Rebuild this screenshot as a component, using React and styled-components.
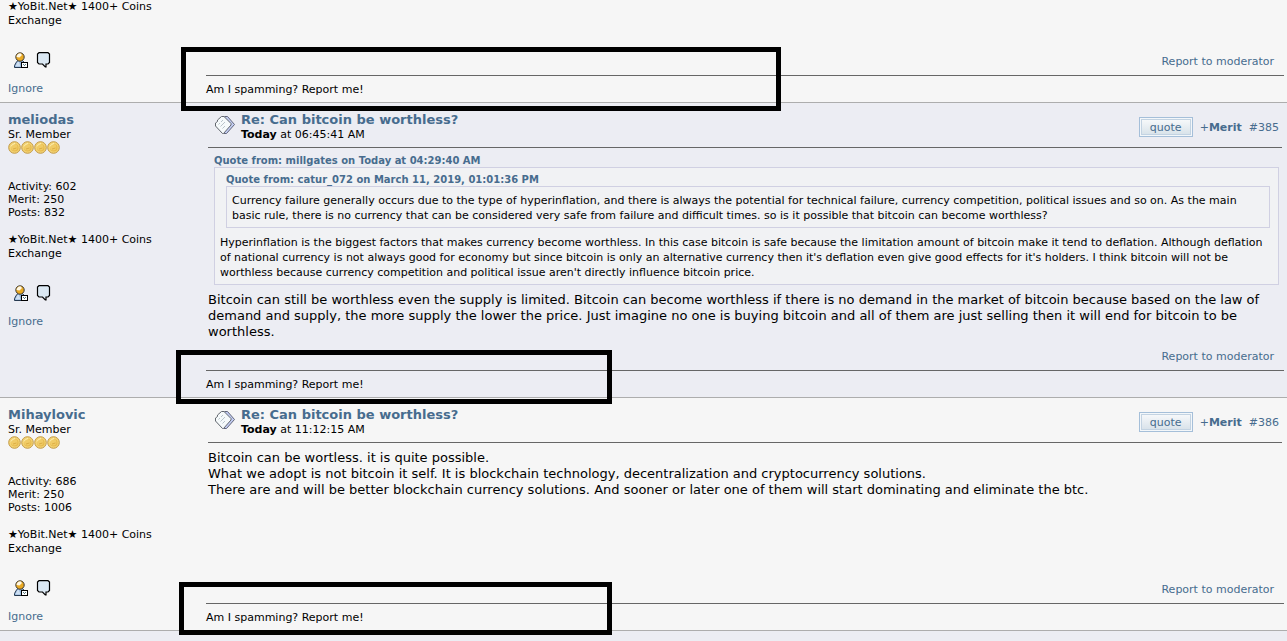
import React from "react";
import styled, { createGlobalStyle } from "styled-components";

const posts = [
  {
    id: 384,
    partial: true,
    frame: { left: -25, top: -29, width: 600, height: 64 },
  },
  {
    id: 385,
    name: "meliodas",
    activity: 602,
    merit: 250,
    count: 832,
    time: "06:45:41 AM",
    alt: true,
    frame: { left: -30, top: -21, width: 436, height: 54 },
    body: (
      <>
        <QuoteBlock from="Quote from: millgates on Today at 04:29:40 AM">
          <QuoteBlock from="Quote from: catur_072 on March 11, 2019, 01:01:36 PM">
            Currency failure generally occurs due to the type of hyperinflation,
            and there is always the potential for technical failure, currency
            competition, political issues and so on. As the main basic rule,
            there is no currency that can be considered very safe from failure
            and difficult times. so is it possible that bitcoin can become
            worthless?
          </QuoteBlock>
          Hyperinflation is the biggest factors that makes currency become
          worthless. In this case bitcoin is safe because the limitation amount
          of bitcoin make it tend to deflation. Although deflation of national
          currency is not always good for economy but since bitcoin is only an
          alternative currency then it's deflation even give good effects for
          it's holders. I think bitcoin will not be worthless because currency
          competition and political issue aren't directly influence bitcoin
          price.
        </QuoteBlock>
        Bitcoin can still be worthless even the supply is limited. Bitcoin can
        become worthless if there is no demand in the market of bitcoin because
        based on the law of demand and supply, the more supply the lower the
        price. Just imagine no one is buying bitcoin and all of them are just
        selling then it will end for bitcoin to be worthless.
      </>
    ),
  },
  {
    id: 386,
    name: "Mihaylovic",
    activity: 686,
    merit: 250,
    count: 1006,
    time: "11:12:15 AM",
    frame: { left: -27, top: -22, width: 433, height: 53 },
    body: (
      <>
        Bitcoin can be wortless. it is quite possible.
        <br />
        What we adopt is not bitcoin it self. It is blockchain technology,
        decentralization and cryptocurrency solutions.
        <br />
        There are and will be better blockchain currency solutions. And sooner
        or later one of them will start dominating and eliminate the btc.
      </>
    ),
  },
];

function QuoteBlock({ from, children }) {
  return (
    <QuoteWrap>
      <QuoteHeader href="#quote">{from}</QuoteHeader>
      <Quote>{children}</Quote>
    </QuoteWrap>
  );
}

const Coin = () => (
  <svg width="13" height="13" viewBox="0 0 13 13" aria-hidden="true">
    <circle cx="6.5" cy="6.5" r="5.8" fill="#f3d373" stroke="#c39a45" />
    <circle cx="6.8" cy="6.8" r="3.8" fill="#e6b94c" />
    <circle cx="6.2" cy="6.2" r="3.2" fill="#f0cb66" />
    <path d="M3 5.5 Q4 3 7 2.5" stroke="#fdf0b4" fill="none" />
    <path d="M5 8 L8.5 7" stroke="#dcae45" />
  </svg>
);

const ProfileIcon = () => (
  <svg width="16" height="16" viewBox="0 0 16 16" aria-hidden="true">
    <path
      d="M1.5 15.5 V13.5 L3.5 10 L5 8.5 H9.5 L12.500 12 V15.5 Z"
      fill="#8fb3da"
      stroke="#25384f"
    />
    <path d="M4 10.5 L6 9.500 L7.5 14.500 H2.5 Z" fill="#cfe0f2" />
    <circle cx="7" cy="5" r="4.2" fill="#e9a923" stroke="#3d3a36" />
    <path d="M3.500 5 Q4 1.600 7.5 1.300 L9 3 L6.500 5.5 Z" fill="#fff8e4" />
    <rect x="8.5" y="10.5" width="6" height="5" fill="#fff" stroke="#000" />
    <path d="M10 12h1v1h-1z M12 12h1v1h-1z M11 13h1v1h-1z" fill="#5a7f86" />
  </svg>
);

const MessageIcon = () => (
  <svg width="16" height="16" viewBox="0 0 16 16" aria-hidden="true">
    <path
      d="M3 .7 H12 L13.5 2 V10.5 L12 12 H10 V15 H9.3 L6.5 12 H3 L1.5 10.5 V2 Z"
      fill="#dbe8f3"
      stroke="#000"
      strokeWidth="1.2"
    />
  </svg>
);

const PostIcon = () => (
  <svg width="20" height="20" viewBox="0 0 20 20" aria-hidden="true">
    <path
      d="M9.5 1.5 H12.5 L19.5 9.5 L11.5 18.5 H9 Z"
      fill="#c3cdf4"
      stroke="#62677a"
    />
    <path
      d="M.5 11 V8 L2.5 6.500 V5 L6.5 1.5 H9 L16 8.5 V10 L8.5 18.5 H7.5 Z"
      fill="#f6fafb"
      stroke="#62676e"
    />
    <path
      d="M3.5 9.5 L5 8 M6 7 L8 5 M5.5 11.5 L10 7 M7.5 13.5 L10 11"
      stroke="#b9c4cb"
    />
  </svg>
);

const Poster = ({ post }) => (
  <PosterColumn $partial={post.partial}>
    {!post.partial && (
      <>
        <PosterName href="#profile">{post.name}</PosterName>
        <div>Sr. Member</div>
        <Coins>
          <Coin />
          <Coin />
          <Coin />
          <Coin />
        </Coins>
        <Stats>
          <div>Activity: {post.activity}</div>
          <div>Merit: {post.merit}</div>
          <div>Posts: {post.count}</div>
        </Stats>
      </>
    )}
    <PersonalText>★YoBit.Net★ 1400+ Coins Exchange</PersonalText>
    <IconLinks>
      <a href="#profile" aria-label="View Profile">
        <ProfileIcon />
      </a>
      <a href="#message" aria-label="Personal Message">
        <MessageIcon />
      </a>
    </IconLinks>
    <TextLink href="#ignore">Ignore</TextLink>
  </PosterColumn>
);

const App = () => (
  <>
    <GlobalStyle />
    <main>
      {posts.map((post) => (
        <Post key={post.id} $alt={post.alt}>
          <Poster post={post} />
          <Content>
            {!post.partial && (
              <>
                <PostHeader>
                  <IconBox>
                    <PostIcon />
                  </IconBox>
                  <Heading>
                    <Subject href="#post">Re: Can bitcoin be worthless?</Subject>
                    <div>
                      <b>Today</b> at {post.time}
                    </div>
                  </Heading>
                  <Actions>
                    <QuoteButton type="button">quote</QuoteButton>
                    <TextLink href="#merit">
                      +<b>Merit</b>
                    </TextLink>
                    <TextLink href="#post">#{post.id}</TextLink>
                  </Actions>
                </PostHeader>
                <Body>{post.body}</Body>
              </>
            )}
            <Report>
              <TextLink href="#report">Report to moderator</TextLink>
            </Report>
            <Signature>
              Am I spamming? Report me!
              <Frame
                $left={post.frame.left}
                $top={post.frame.top}
                $width={post.frame.width}
                $height={post.frame.height}
              />
            </Signature>
          </Content>
        </Post>
      ))}
    </main>
  </>
);

const GlobalStyle = createGlobalStyle`
  * {
    box-sizing: border-box;
  }
  body {
    margin: 0;
    min-height: 100vh;
    background: #ecedf3;
    color: #000;
    font: 11px/13px Verdana, "DejaVu Sans", sans-serif;
  }
  a {
    color: #476c8e;
    text-decoration: none;
  }
  svg {
    display: block;
  }
`;

const Post = styled.article`
  display: flex;
  background: ${({ $alt }) => ($alt ? "#ecedf3" : "#f6f6f6")};
  border-bottom: 1px solid #adadad;
`;

const PosterColumn = styled.div`
  display: flex;
  flex-direction: column;
  flex: none;
  width: 206px;
  padding: ${({ $partial }) => ($partial ? "0" : "9px")} 40px 7px 8px;
`;

const PosterName = styled.a`
  font-size: 13px;
  line-height: 16px;
  font-weight: bold;
`;

const Coins = styled.div`
  display: flex;
`;

const Stats = styled.div`
  padding: 26px 0 14px;
`;

const PersonalText = styled.div`
  line-height: 14px;
`;

const IconLinks = styled.div`
  display: flex;
  gap: 7px;
  padding: 24px 0 14px 5px;
`;

const TextLink = styled.a`
  line-height: 13px;
`;

const Content = styled.div`
  display: flex;
  flex-direction: column;
  flex: 1;
  min-width: 0;
  padding-right: 3px;
`;

const PostHeader = styled.header`
  display: flex;
  margin: 0 2px;
  padding: 9px 3px 6px 7px;
  border-bottom: 1px solid #666;
`;

const IconBox = styled.div`
  padding-top: 3px;
`;

const Heading = styled.div`
  flex: 1;
  padding-left: 6px;
`;

const Subject = styled.a`
  display: block;
  font-size: 13px;
  line-height: 16px;
  font-weight: bold;
`;

const Actions = styled.div`
  display: flex;
  align-items: center;
  gap: 7px;
  padding-top: 1px;
`;

const QuoteButton = styled.button`
  height: 20px;
  width: 54px;
  padding: 0;
  border: 1px solid #a5bfd9;
  background: linear-gradient(#fafbfc, #d5e0e8);
  box-shadow: inset 0 0 0 1px #f3f7fa, inset 0 0 0 2px #c3d3e2;
  color: #476c8e;
  font: inherit;
`;

const Body = styled.div`
  padding: 7px 2px 0;
  font-size: 13px;
  line-height: 16px;
`;

const QuoteWrap = styled.div`
  margin: 0 3px 7px 6px;
`;

const QuoteHeader = styled.a`
  display: block;
  font-size: 10px;
  line-height: 12px;
  font-weight: bold;
`;

const Quote = styled.blockquote`
  margin: 0;
  padding: 6px 5px 4px;
  border: 1px solid #d0d0e2;
  background: #f1f2f4;
  font-size: 11px;
  line-height: 15px;
`;

const Report = styled.div`
  margin-top: auto;
  padding: 10px 10px 7px;
  text-align: right;
`;

const Signature = styled.div`
  position: relative;
  padding: 7px 0 6px;
  border-top: 1px solid #666;
`;

const Frame = styled.div`
  position: absolute;
  z-index: 1;
  left: ${({ $left }) => $left}px;
  top: ${({ $top }) => $top}px;
  width: ${({ $width }) => $width}px;
  height: ${({ $height }) => $height}px;
  border: 5px solid #000;
  pointer-events: none;
`;

export default App;
